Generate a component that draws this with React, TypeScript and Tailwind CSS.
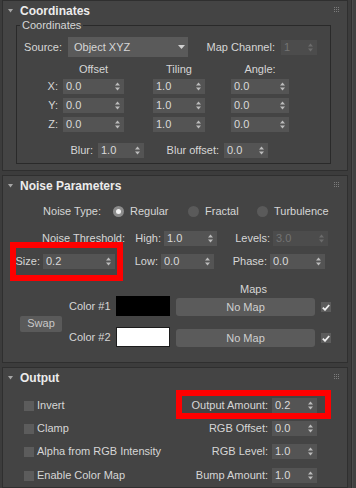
import React from 'react';

const PANEL = 'bg-[#444444]';

function SpinArrows({ dim }: { dim?: boolean }) {
  const c = dim ? '#6c6c6c' : '#bcbcbc';
  return (
    <svg width="5" height="9" viewBox="0 0 5 9" className="shrink-0">
      <path d="M2.5 0.5 L5 3.5 L0 3.5 Z" fill={c} />
      <path d="M0 5.5 L5 5.5 L2.5 8.5 Z" fill={c} />
    </svg>
  );
}

function Spinner({ value, className, dim }: { value: string; className: string; dim?: boolean }) {
  return (
    <div
      className={`flex h-[15px] shrink-0 items-center justify-between pl-[3px] pr-[4px] ${
        dim ? 'bg-[#4c4c4c] text-[#747474]' : 'bg-[#545454] text-[#dadada]'
      } ${className}`}
    >
      <span className="leading-none">{value}</span>
      <SpinArrows dim={dim} />
    </div>
  );
}

function DragDots() {
  const dots = [];
  for (let r = 0; r < 3; r++) for (let c = 0; c < 3; c++) dots.push(<rect key={`${r}${c}`} x={c * 2} y={r * 2} width="1" height="1" fill="#7c7c7c" />);
  return (
    <svg width="5" height="5" className="ml-auto mr-[8px] mt-[6px] self-start">
      {dots}
    </svg>
  );
}

function RolloutHeader({ title }: { title: string }) {
  return (
    <div className="flex h-[19px] items-center pl-[5px]">
      <svg width="5" height="4" viewBox="0 0 5 4">
        <path d="M0 0 L5 0 L2.5 3.5 Z" fill="#a6a6a6" />
      </svg>
      <span className="ml-[7px] text-[12px] font-bold leading-none text-[#ececec]">{title}</span>
      <DragDots />
    </div>
  );
}

function Radio({ on, className = '' }: { on?: boolean; className?: string }) {
  return (
    <div
      className={`flex h-[11px] w-[11px] shrink-0 items-center justify-center rounded-full ${
        on ? 'bg-[#8c8c8c]' : 'bg-[#5a5a5a]'
      } ${className}`}
    >
      {on && <div className="h-[5px] w-[5px] rounded-full bg-[#f2f2f2]" />}
    </div>
  );
}

function Check({ on }: { on?: boolean }) {
  return (
    <div className="flex h-[10px] w-[10px] shrink-0 items-center justify-center bg-[#5c5c5c]">
      {on && (
        <svg width="8" height="7" viewBox="0 0 8 7">
          <path d="M0.8 3.6 L3 5.8 L7.2 1" stroke="#f0f0f0" strokeWidth="1.8" fill="none" />
        </svg>
      )}
    </div>
  );
}

function Rollout({ title, children, className = '' }: { title: string; children: React.ReactNode; className?: string }) {
  return (
    <div className={`ml-[2px] w-[346px] shrink-0 border border-[#2f2f2f] ${PANEL} ${className}`}>
      <RolloutHeader title={title} />
      {children}
    </div>
  );
}

function XYZRow({ axis }: { axis: string }) {
  return (
    <div className="flex h-[15px] items-center">
      <div className="w-[41px] text-right">{axis}:</div>
      <Spinner value="0.0" className="ml-[5px] w-[61px]" />
      <Spinner value="1.0" className="ml-[29px] w-[52px]" />
      <Spinner value="0.0" className="ml-[26px] w-[58px]" />
    </div>
  );
}

function OutRow({ check, label, value, mark }: { check: string; label: string; value: string; mark?: boolean }) {
  return (
    <div className="relative flex h-[15px] items-center pl-[21px]">
      <div className="flex w-[150px] items-center gap-[3px]">
        <Check />
        <span>{check}</span>
      </div>
      <div className="w-[94px] text-right">{label}</div>
      <Spinner value={value} className="ml-[4px] w-[45px]" />
      {mark && <div className="absolute left-[173px] top-[-8px] h-[29px] w-[155px] border-[6px] border-[#ff0000]" />}
    </div>
  );
}

export default function App() {
  return (
    <div className="flex h-[488px] w-[356px] overflow-hidden bg-[#3c3c3c] font-['Liberation_Sans',Arial,sans-serif] text-[11px] leading-[13px] text-[#d6d6d6]">
      <div className="flex w-[348px] flex-col gap-[4px]">
        {/* Coordinates */}
        <Rollout title="Coordinates" className="pb-[6px]">
          <div className="ml-[13px] mr-[16px] mt-[5px] border border-[#2a2a2a] pb-[5px]">
            <div className={`-mt-[7px] ml-[3px] w-fit px-[2px] ${PANEL}`}>Coordinates</div>
            <div className="mt-[5px] flex h-[20px] items-center">
              <div className="w-[45px] text-right">Source:</div>
              <div className="ml-[6px] flex h-[20px] w-[120px] items-center justify-between bg-[#5a5a5a] pl-[6px] pr-[3px]">
                <span>Object XYZ</span>
                <svg width="7" height="4" viewBox="0 0 7 4">
                  <path d="M0 0 L7 0 L3.5 4 Z" fill="#d0d0d0" />
                </svg>
              </div>
              <div className="w-[87px] text-right">Map Channel:</div>
              <Spinner value="1" dim className="ml-[6px] w-[36px]" />
            </div>
            <div className="mt-[6px] flex h-[13px] items-center">
              <div className="ml-[46px] w-[61px] text-center">Offset</div>
              <div className="ml-[29px] w-[52px] text-center">Tiling</div>
              <div className="ml-[26px] w-[58px] text-center">Angle:</div>
            </div>
            <div className="mt-[3px] flex flex-col gap-[4px]">
              <XYZRow axis="X" />
              <XYZRow axis="Y" />
              <XYZRow axis="Z" />
            </div>
            <div className="mt-[11px] flex h-[15px] items-center">
              <div className="w-[76px] text-right">Blur:</div>
              <Spinner value="1.0" className="ml-[5px] w-[46px]" />
              <div className="w-[75px] text-right">Blur offset:</div>
              <Spinner value="0.0" className="ml-[5px] w-[44px]" />
            </div>
          </div>
        </Rollout>

        {/* Noise Parameters */}
        <Rollout title="Noise Parameters" className="pb-[15px]">
          <div className="mt-[9px] flex h-[14px] items-center">
            <div className="w-[98px] text-right">Noise Type:</div>
            <Radio on className="ml-[12px]" />
            <div className="ml-[6px] w-[58px]">Regular</div>
            <Radio />
            <div className="ml-[6px] w-[52px]">Fractal</div>
            <Radio />
            <div className="ml-[6px]">Turbulence</div>
          </div>
          <div className="mt-[13px] flex h-[15px] items-center">
            <div className="w-[122px] text-right">Noise Threshold:</div>
            <div className="w-[36px] text-right">High:</div>
            <Spinner value="1.0" className="ml-[3px] w-[53px]" />
            <div className="w-[53px] text-right">Levels:</div>
            <Spinner value="3.0" dim className="ml-[3px] w-[55px]" />
          </div>
          <div className="relative mt-[8px] flex h-[15px] items-center">
            <div className="w-[37px] text-right">Size:</div>
            <Spinner value="0.2" className="ml-[3px] w-[72px]" />
            <div className="w-[43px] text-right">Low:</div>
            <Spinner value="0.0" className="ml-[3px] w-[53px]" />
            <div className="w-[53px] text-right">Phase:</div>
            <Spinner value="0.0" className="ml-[3px] w-[55px]" />
            <div className="absolute left-[7px] top-[-12px] h-[39px] w-[113px] border-[6px] border-[#ff0000]" />
          </div>
          <div className="mt-[14px] h-[13px] pl-[237px]">Maps</div>
          <div className="flex items-center">
            <div className="ml-[17px] mt-[4px] flex h-[16px] w-[42px] items-center justify-center rounded-[2px] bg-[#5a5a5a] text-[#c8c8c8]">
              Swap
            </div>
            <div className="flex flex-col gap-[11px]">
              {[
                { label: 'Color #1', sw: 'bg-[#000000] border-[#000000]' },
                { label: 'Color #2', sw: 'bg-[#ffffff] border-[#1c1c1c]' },
              ].map((r) => (
                <div key={r.label} className="flex h-[20px] items-center">
                  <div className="ml-[7px] w-[47px]">{r.label}</div>
                  <div className={`h-[20px] w-[54px] border ${r.sw}`} />
                  <div className="ml-[6px] mt-[2px] flex h-[18px] w-[139px] items-center justify-center rounded-[3px] bg-[#5b5b5b] text-[#cfcfcf]">
                    No Map
                  </div>
                  <div className="ml-[6px] mt-[2px]">
                    <Check on />
                  </div>
                </div>
              ))}
            </div>
          </div>
        </Rollout>

        {/* Output */}
        <Rollout title="Output" className="flex-1">
          <div className="mt-[11px] flex flex-col">
            <OutRow check="Invert" label="Output Amount:" value="0.2" mark />
            <div className="mt-[8px]">
              <OutRow check="Clamp" label="RGB Offset:" value="0.0" />
            </div>
            <div className="mt-[8px]">
              <OutRow check="Alpha from RGB Intensity" label="RGB Level:" value="1.0" />
            </div>
            <div className="mt-[9px]">
              <OutRow check="Enable Color Map" label="Bump Amount:" value="1.0" />
            </div>
          </div>
        </Rollout>
      </div>
      <div className="flex w-[8px]">
        <div className="w-[3px]" />
        <div className="w-[1px] bg-[#2e2e2e]" />
        <div className="w-[1px] bg-[#4c4c4c]" />
        <div className="w-[3px] bg-[#414141]" />
      </div>
    </div>
  );
}
